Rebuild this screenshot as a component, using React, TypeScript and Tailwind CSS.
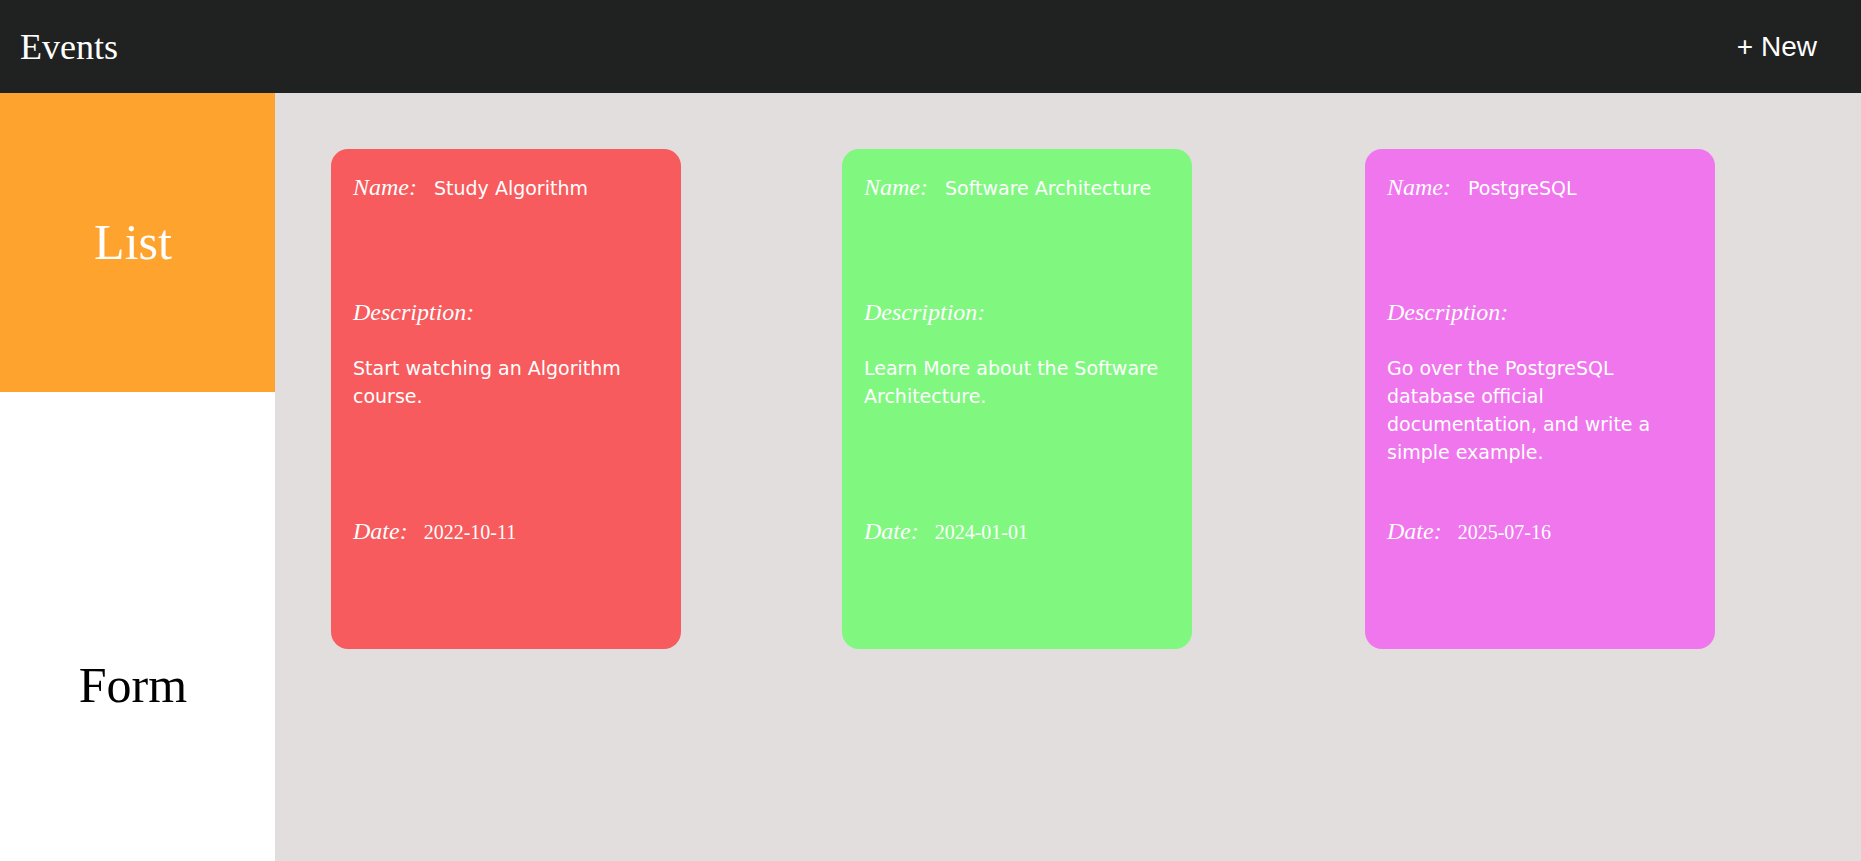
import React from "react";

type Ev = { name: string; desc: string; date: string; bg: string; ml: string };

const events: Ev[] = [
  { name: "Study Algorithm", desc: "Start watching an Algorithm course.", date: "2022-10-11", bg: "bg-[#f75b5d]", ml: "ml-0" },
  { name: "Software Architecture", desc: "Learn More about the Software Architecture.", date: "2024-01-01", bg: "bg-[#80f880]", ml: "ml-[161px]" },
  { name: "PostgreSQL", desc: "Go over the PostgreSQL database official documentation, and write a simple example.", date: "2025-07-16", bg: "bg-[#f076ee]", ml: "ml-[173px]" },
];

const serif = "font-['Liberation_Serif','Times_New_Roman',serif]";
const comic = "font-['Comic_Sans_MS','DejaVu_Sans',sans-serif]";

function Card({ e }: { e: Ev }) {
  return (
    <div className={`${e.bg} ${e.ml} w-[350px] h-[500px] shrink-0 rounded-[17px] px-[22px] pt-[24px] text-white flex flex-col`}>
      <div className="h-[125px]">
        <div className="flex items-baseline h-[28px] leading-[28px] whitespace-nowrap">
          <span className={`${serif} italic text-[24px]`}>Name:</span>
          <span className={`${comic} text-[19px] ml-[17px]`}>{e.name}</span>
        </div>
      </div>
      <div className={`${serif} italic text-[24px] h-[28px] leading-[28px]`}>Description:</div>
      <div className={`${comic} text-[19px] leading-[28px] mt-[28px] h-[163px]`}>{e.desc}</div>
      <div className="flex items-baseline h-[28px] leading-[28px]">
        <span className={`${serif} italic text-[24px]`}>Date:</span>
        <span className={`${serif} text-[20px] ml-[16px]`}>{e.date}</span>
      </div>
    </div>
  );
}

export default function App() {
  return (
    <div className="w-full h-[861px] flex flex-col overflow-hidden">
      <header className="h-[93px] shrink-0 bg-[#202121] flex items-center justify-between pl-[20px] pr-[44px] text-white">
        <div className={`${serif} text-[36px] leading-none`}>Events</div>
        <div className="font-['Liberation_Sans',Arial,sans-serif] text-[28px] leading-none">+ New</div>
      </header>
      <div className="flex flex-1 min-h-0">
        <aside className="w-[275px] shrink-0 flex flex-col bg-white">
          <div className="h-[299px] bg-[#ffa32f] flex items-center justify-center pr-[9px]">
            <span className={`${serif} text-[50px] text-white`}>List</span>
          </div>
          <div className="flex-1 flex justify-center pt-[265px] pr-[9px]">
            <span className={`${serif} text-[50px] text-black leading-[57px]`}>Form</span>
          </div>
        </aside>
        <main className="flex-1 bg-[#e2dede] pt-[56px] pl-[56px] flex items-start">
          {events.map((e) => (
            <Card key={e.name} e={e} />
          ))}
        </main>
      </div>
    </div>
  );
}
